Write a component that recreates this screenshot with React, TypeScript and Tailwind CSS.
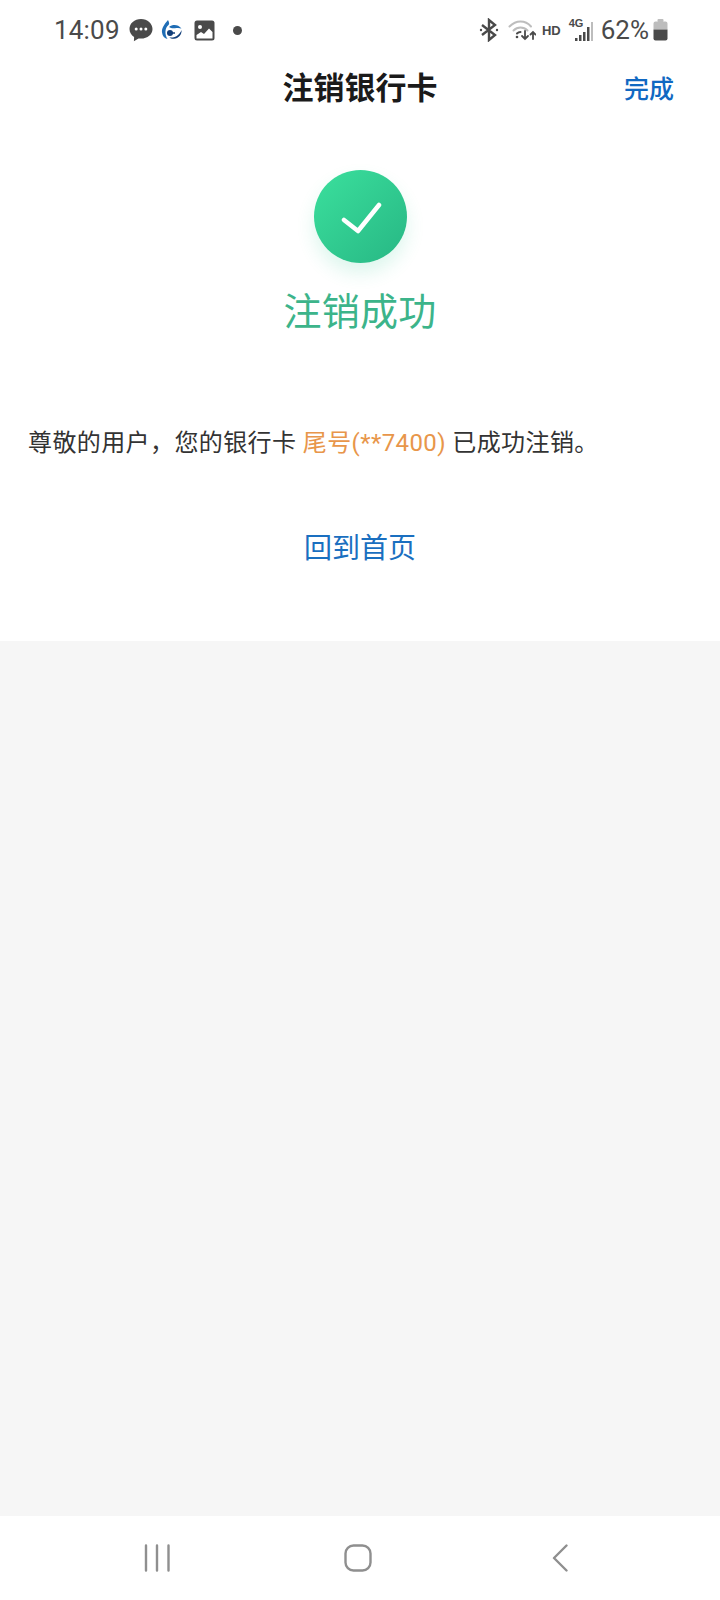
import React from "react";

const cjk = "font-['Roboto','Noto_Sans_CJK_SC',sans-serif]";

function StatusLeft() {
  return (
    <div className="flex items-center">
      <span className="text-[26px] leading-none text-[#4a4a4a] tracking-[0.2px]">14:09</span>
      <svg width="26" height="26" viewBox="0 0 26 26" className="ml-[8px]">
        <path d="M13 2C6.400 2 1.500 6.400 1.500 12c0 3.400 1.800 6.200 4.600 8l-.2 4.200 4.600-2.800c.8.2 1.600.2 2.500.2 6.600 0 11.500-4.200 11.500-9.600S19.600 2 13 2z" fill="#4a4a4a" />
        <circle cx="8.200" cy="12" r="1.500" fill="#fff" />
        <circle cx="13" cy="12" r="1.500" fill="#fff" />
        <circle cx="17.800" cy="12" r="1.500" fill="#fff" />
      </svg>
      <svg width="22" height="22" viewBox="0 0 22 22" className="ml-[7px]">
        <path d="M7 1C3 5.500.5 9.500 1 13.500c.4 3.500 2.700 6 5.500 6.500C3.500 15.500 3.800 9 7.500 6 8.800 5 8 3 7 1z" fill="#1f6db5" />
        <path d="M8 8c4-3 9-2.500 12.500 1.500-1.500-.5-3-.8-5-.5C12.500 9.300 10 9.500 8 8z" fill="#1f6db5" />
        <path d="M20.500 11c.5 4.500-3 8.500-7.500 8.800-2 .1-3.500-.4-4.800-1.300 3 .4 6.500-.3 8.800-2.500 1.500-1.400 2.800-3 3.500-5z" fill="#123f7a" />
        <circle cx="9" cy="14" r="3" fill="#123f7a" />
        <path d="M9 14h5" stroke="#123f7a" strokeWidth="1.500" />
      </svg>
      <svg width="21" height="21" viewBox="0 0 21 21" className="ml-[11px]">
        <rect x="0.500" y="0.500" width="20" height="20" rx="2.500" fill="#4a4a4a" />
        <circle cx="6" cy="7" r="2" fill="#fff" />
        <path d="M2.500 18.500v-3.500l4.500-3 3 2 5-5.500 3.500 3.500v6.500z" fill="#fff" />
      </svg>
      <span className="ml-[18px] w-[9px] h-[9px] rounded-full bg-[#4a4a4a]" />
    </div>
  );
}

function StatusRight() {
  return (
    <div className="flex items-center">
      <svg width="20" height="24" viewBox="0 0 20 24" fill="none" stroke="#4a4a4a" strokeWidth="2.400">
        <path d="M3 7l13 10-6 5V2l6 5L3 17" />
        <circle cx="2" cy="12" r="1.200" fill="#4a4a4a" stroke="none" />
        <circle cx="18" cy="12" r="1.200" fill="#4a4a4a" stroke="none" />
      </svg>
      <svg width="28" height="22" viewBox="0 0 28 22" fill="none" className="ml-[9px]" strokeLinecap="round">
        <path d="M1.500 7.500C5 4 9 2.500 12.500 2.500S20 4 23 7.500" stroke="#bdbdbd" strokeWidth="2" />
        <path d="M5.500 11.500C7.500 9.500 10 8.500 12.500 8.500s5 1 7 3" stroke="#bdbdbd" strokeWidth="2" />
        <path d="M9 14.500c1-1 2.200-1.500 3.500-1.500" stroke="#4a4a4a" strokeWidth="2" />
        <circle cx="9" cy="18" r="1.300" fill="#4a4a4a" />
        <path d="M17 12v8m-3-3l3 3 3-3" stroke="#4a4a4a" strokeWidth="1.800" />
        <path d="M25 20v-7m-2.500 2.500L25 13l2.500 2.500" stroke="#4a4a4a" strokeWidth="1.800" />
      </svg>
      <span className="ml-[6px] text-[13px] leading-none font-bold text-[#4a4a4a] font-['Liberation_Sans',sans-serif]">HD</span>
      <div className="ml-[8px] relative w-[24px] h-[24px]">
        <span className="absolute left-0 top-0 text-[11px] leading-none font-bold text-[#4a4a4a] font-['Liberation_Sans',sans-serif]">4G</span>
        <svg width="24" height="24" viewBox="0 0 24 24" className="absolute left-0 top-0">
          <rect x="6" y="20" width="2.500" height="3" fill="#4a4a4a" />
          <rect x="10" y="17" width="2.500" height="6" fill="#4a4a4a" />
          <rect x="14" y="14" width="2.500" height="9" fill="#4a4a4a" />
          <rect x="18" y="9" width="2.500" height="14" fill="#4a4a4a" />
          <rect x="22" y="4" width="2" height="19" fill="#bdbdbd" />
        </svg>
      </div>
      <span className="ml-[8px] text-[26px] leading-none text-[#4a4a4a]">62%</span>
      <svg width="15" height="22" viewBox="0 0 15 22" className="ml-[4px]">
        <rect x="4.500" y="0" width="6" height="3" rx="1" fill="#bdbdbd" />
        <path d="M.5 4.500a2 2 0 0 1 2-2h10a2 2 0 0 1 2 2v6H.5z" fill="#bdbdbd" />
        <path d="M.5 10.500h14v9a2 2 0 0 1-2 2h-10a2 2 0 0 1-2-2z" fill="#4a4a4a" />
      </svg>
    </div>
  );
}

export default function App() {
  return (
    <div className={`w-[720px] h-[1600px] flex flex-col bg-[#f6f6f6] ${cjk}`}>
      <div className="bg-white h-[641px] flex flex-col">
        <div className="h-[58px] pl-[54px] pr-[52px] flex items-center justify-between pt-[2px]">
          <StatusLeft />
          <StatusRight />
        </div>
        <div className="h-[60px] grid grid-cols-[1fr_auto_1fr] items-center pr-[46px]">
          <div />
          <div className="text-[31px] leading-none font-bold text-[#1a1a1a] pl-[46px]">注销银行卡</div>
          <div className="text-right text-[25px] leading-none font-medium text-[#1068c2] pt-[2px]">完成</div>
        </div>
        <div className="flex flex-col items-center mt-[52px]">
          <div className="w-[93px] h-[93px] rounded-full bg-gradient-to-br from-[#3be09d] to-[#27b784] shadow-[0_10px_18px_rgba(46,200,140,0.16)] flex items-center justify-center">
            <svg width="44" height="36" viewBox="-22 -18 44 36" fill="none" stroke="#fff" strokeWidth="4.500" strokeLinecap="round" strokeLinejoin="round">
              <path d="M-16 3L-2 14L19-12" />
            </svg>
          </div>
          <div className="mt-[26px] text-[38px] leading-[46px] text-[#3cb48a] tracking-[0.2px]">注销成功</div>
        </div>
        <div className="mt-[91px] pl-[28px] text-[24px] leading-[34px] text-[#333333] whitespace-pre tracking-[0.4px]">
          尊敬的用户，您的银行卡 <span className="text-[#e8964a]">尾号(**7400)</span> 已成功注销。
        </div>
        <div className="mt-[71px] text-center text-[28px] leading-[36px] text-[#1a6fc0]">回到首页</div>
      </div>
      <div className="flex-1" />
      <div className="bg-white h-[84px] flex items-center pl-[144px]">
        <svg width="26" height="28" viewBox="0 0 26 28" stroke="#8f8f8f" strokeWidth="2.400" strokeLinecap="round">
          <path d="M2 1.500v25M13 1.500v25M24.500 1.500v25" />
        </svg>
        <svg width="28" height="28" viewBox="0 0 28 28" fill="none" stroke="#8f8f8f" strokeWidth="2.400" className="ml-[174px]">
          <rect x="1.500" y="1.500" width="25" height="25" rx="8" />
        </svg>
        <svg width="16" height="28" viewBox="0 0 16 28" fill="none" stroke="#8f8f8f" strokeWidth="2.400" strokeLinecap="round" strokeLinejoin="round" className="ml-[180px]">
          <path d="M14.500 1.500L2 14l12.500 12.500" />
        </svg>
      </div>
    </div>
  );
}
